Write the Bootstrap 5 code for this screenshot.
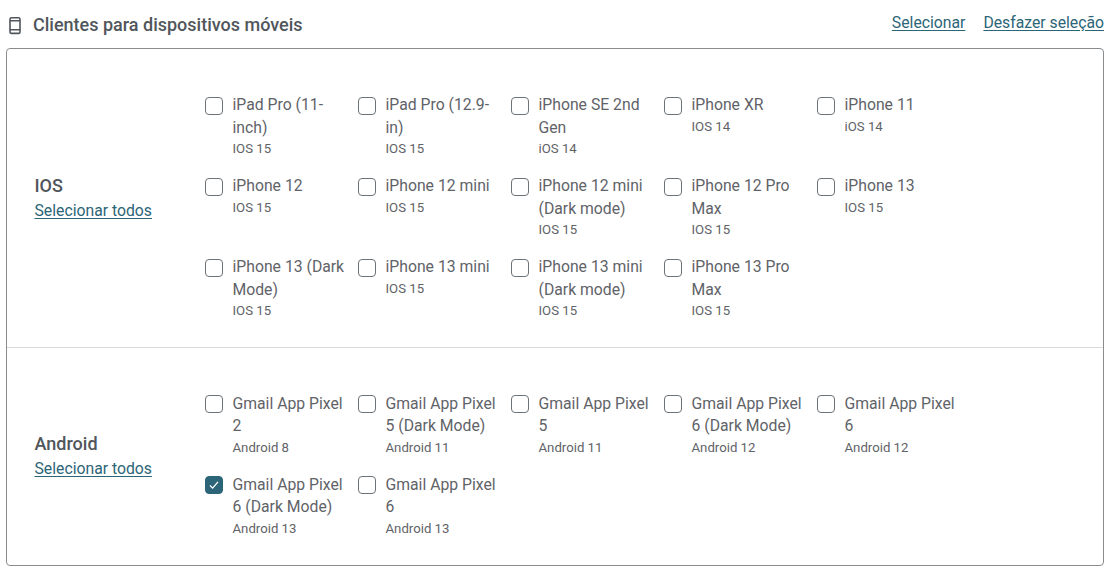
<!DOCTYPE html>
<html lang="pt">
<head>
<meta charset="utf-8">
<title>Clientes</title>
<link rel="stylesheet" href="https://cdn.jsdelivr.net/npm/bootstrap@5.3.0/dist/css/bootstrap.min.css">
<style>
body{font-family:Roboto,"Liberation Sans",sans-serif;color:#5f6368;background:#fff;font-size:15.75px;overflow:hidden}
.page-wrap{width:1098px;margin-left:6px}
.head-bar{height:48px;padding-left:2px}
.head-title{font-size:18px;font-weight:500;color:#50565b;margin:2px 0 0 0;line-height:24px}
.phone-ico{width:14px;height:19px;margin-right:11px;margin-top:3px;flex:none}
.lnk{color:#2c6577;text-decoration:underline;text-underline-offset:2px}
.head-links{gap:18px;margin-top:-3px}
.box{border:1px solid #8a8d90;border-radius:4px;height:518px}
.sect{padding-left:27.5px}
.sect-a{height:298.6px;border-bottom:1px solid #d9dadb}
.sect-b{height:217.4px}
.sect-side{width:170.5px;flex:none}
.sect-a .sect-side{padding-top:1.5px}
.sect-name{font-size:18px;font-weight:500;color:#50565b;line-height:24px;margin-bottom:1px}
.dev-grid{display:grid;grid-template-columns:repeat(5,153px);grid-auto-rows:81px;padding-top:44.95px}
.sect-a .dev-grid{padding-top:45.25px}
.dev{display:flex;align-items:flex-start}
.chk{appearance:none;width:18px;height:18px;border:1px solid #6c7378;border-radius:4px;background:#fff;margin:2.85px 9.5px 0 0;flex:none;display:block}
.sect-a .chk{margin-top:2.95px}
.chk:checked{background-color:#2c6577;border-color:#2c6577;background-image:url("data:image/svg+xml,%3Csvg xmlns='http://www.w3.org/2000/svg' viewBox='0 0 18 18'%3E%3Cpath d='M4.5 9.5l3 3 6-7' fill='none' stroke='%23fff' stroke-width='1.5'/%3E%3C/svg%3E")}
.dev-name{display:block;line-height:22.4px;width:115px;color:#5f6368}
.dev-os{display:block;font-size:13.2px;line-height:19px;margin-top:.45px;color:#5f6368}
.sect-a .dev-os{margin-top:.15px}
</style>
</head>
<body>
<div class="page-wrap">
  <div class="head-bar d-flex justify-content-between align-items-center">
    <div class="d-flex align-items-center">
      <svg class="phone-ico" viewBox="0 0 14 19" fill="none" stroke="#50565b" stroke-width="1.6"><rect x="2" y="1.8" width="10" height="15.6" rx="1.5"/><path d="M2 4.8h10M2 13.8h10"/></svg>
      <h1 class="head-title">Clientes para dispositivos móveis</h1>
    </div>
    <div class="d-flex head-links"><a class="lnk" href="#">Selecionar</a><a class="lnk" href="#">Desfazer seleção</a></div>
  </div>
  <div class="box">
    <div class="sect sect-a d-flex">
      <div class="sect-side d-flex flex-column justify-content-center">
        <div class="sect-name">IOS</div>
        <a class="lnk" href="#">Selecionar todos</a>
      </div>
      <div class="dev-grid">
        <label class="dev"><input class="chk" type="checkbox"><span><span class="dev-name">iPad Pro (11-inch)</span><span class="dev-os">IOS 15</span></span></label>
        <label class="dev"><input class="chk" type="checkbox"><span><span class="dev-name">iPad Pro (12.9-in)</span><span class="dev-os">IOS 15</span></span></label>
        <label class="dev"><input class="chk" type="checkbox"><span><span class="dev-name">iPhone SE 2nd Gen</span><span class="dev-os">iOS 14</span></span></label>
        <label class="dev"><input class="chk" type="checkbox"><span><span class="dev-name">iPhone XR</span><span class="dev-os">IOS 14</span></span></label>
        <label class="dev"><input class="chk" type="checkbox"><span><span class="dev-name">iPhone 11</span><span class="dev-os">iOS 14</span></span></label>
        <label class="dev"><input class="chk" type="checkbox"><span><span class="dev-name">iPhone 12</span><span class="dev-os">IOS 15</span></span></label>
        <label class="dev"><input class="chk" type="checkbox"><span><span class="dev-name">iPhone 12 mini</span><span class="dev-os">IOS 15</span></span></label>
        <label class="dev"><input class="chk" type="checkbox"><span><span class="dev-name">iPhone 12 mini (Dark mode)</span><span class="dev-os">IOS 15</span></span></label>
        <label class="dev"><input class="chk" type="checkbox"><span><span class="dev-name">iPhone 12 Pro Max</span><span class="dev-os">IOS 15</span></span></label>
        <label class="dev"><input class="chk" type="checkbox"><span><span class="dev-name">iPhone 13</span><span class="dev-os">IOS 15</span></span></label>
        <label class="dev"><input class="chk" type="checkbox"><span><span class="dev-name">iPhone 13 (Dark Mode)</span><span class="dev-os">IOS 15</span></span></label>
        <label class="dev"><input class="chk" type="checkbox"><span><span class="dev-name">iPhone 13 mini</span><span class="dev-os">IOS 15</span></span></label>
        <label class="dev"><input class="chk" type="checkbox"><span><span class="dev-name">iPhone 13 mini (Dark mode)</span><span class="dev-os">IOS 15</span></span></label>
        <label class="dev"><input class="chk" type="checkbox"><span><span class="dev-name">iPhone 13 Pro Max</span><span class="dev-os">IOS 15</span></span></label>
      </div>
    </div>
    <div class="sect sect-b d-flex">
      <div class="sect-side d-flex flex-column justify-content-center">
        <div class="sect-name">Android</div>
        <a class="lnk" href="#">Selecionar todos</a>
      </div>
      <div class="dev-grid">
        <label class="dev"><input class="chk" type="checkbox"><span><span class="dev-name">Gmail App Pixel 2</span><span class="dev-os">Android 8</span></span></label>
        <label class="dev"><input class="chk" type="checkbox"><span><span class="dev-name">Gmail App Pixel 5 (Dark Mode)</span><span class="dev-os">Android 11</span></span></label>
        <label class="dev"><input class="chk" type="checkbox"><span><span class="dev-name">Gmail App Pixel 5</span><span class="dev-os">Android 11</span></span></label>
        <label class="dev"><input class="chk" type="checkbox"><span><span class="dev-name">Gmail App Pixel 6 (Dark Mode)</span><span class="dev-os">Android 12</span></span></label>
        <label class="dev"><input class="chk" type="checkbox"><span><span class="dev-name">Gmail App Pixel 6</span><span class="dev-os">Android 12</span></span></label>
        <label class="dev"><input class="chk" type="checkbox" checked><span><span class="dev-name">Gmail App Pixel 6 (Dark Mode)</span><span class="dev-os">Android 13</span></span></label>
        <label class="dev"><input class="chk" type="checkbox"><span><span class="dev-name">Gmail App Pixel 6</span><span class="dev-os">Android 13</span></span></label>
      </div>
    </div>
  </div>
</div>
<script src="https://cdn.jsdelivr.net/npm/bootstrap@5.3.0/dist/js/bootstrap.bundle.min.js"></script>
</body>
</html>
